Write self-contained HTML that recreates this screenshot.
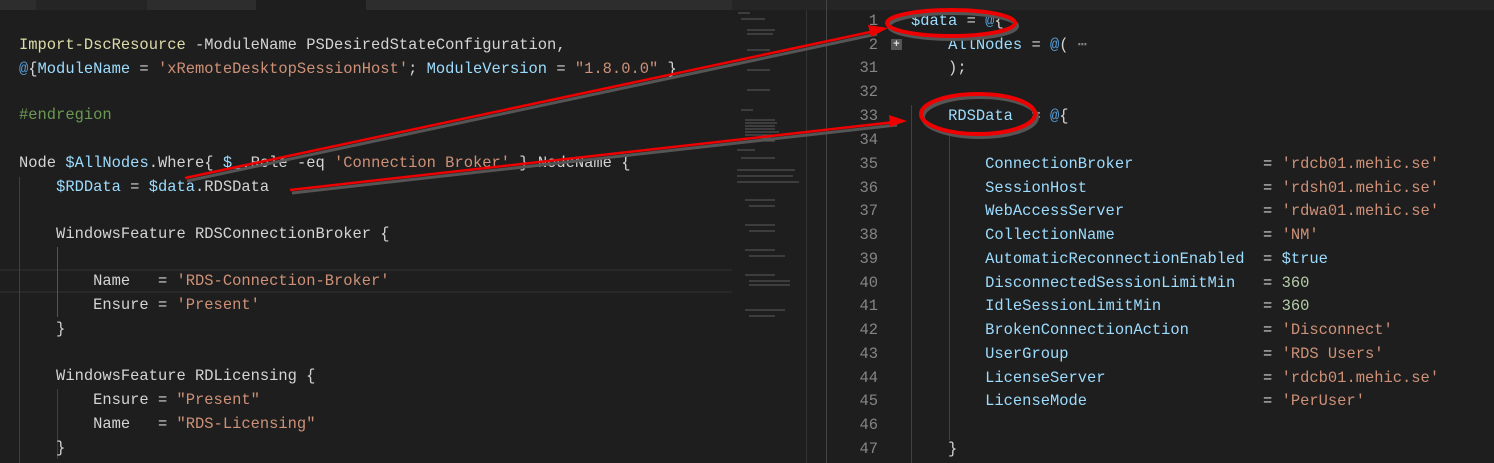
<!DOCTYPE html>
<html><head><style>
body{margin:0;width:1494px;height:463px;background:#1e1e1e;overflow:hidden;position:relative;font-family:"Liberation Mono",monospace;font-size:15.45px;color:#d4d4d4}
.l{position:absolute;white-space:pre;line-height:20px;height:20px}
.v{color:#9cdcfe}.s{color:#ce9178}.c{color:#6a9955}.k{color:#569cd6}.f{color:#dcdcaa}.n{color:#b5cea8}
.num{position:absolute;width:50px;text-align:right;color:#858585;left:828px;white-space:pre;line-height:20px}
.g{position:absolute;width:1px;background:#404040}
</style></head><body>
<div style="position:absolute;left:0;top:0;width:1494px;height:10px;background:#252526"></div>
<div style="position:absolute;left:0;top:0;width:36px;height:10px;background:#2d2d2d"></div>
<div style="position:absolute;left:147px;top:0;width:293px;height:10px;background:#2d2d2d"></div>
<div style="position:absolute;left:256px;top:0;width:110px;height:10px;background:#1e1e1e"></div>
<div style="position:absolute;left:366px;top:0;width:366px;height:10px;background:#2d2d2d"></div>
<div style="position:absolute;left:826px;top:0;width:668px;height:10px;background:#252526"></div>
<div style="position:absolute;left:732px;top:10px;width:90px;height:453px;background:#1e1e1e"></div>
<div style="position:absolute;left:806px;top:10px;width:1px;height:453px;background:#333"></div>
<div style="position:absolute;left:826px;top:0;width:1px;height:463px;background:#444"></div>
<svg style="position:absolute;left:735px;top:10px" width="70" height="320">
<g stroke="#777" stroke-width="1" opacity="0.7">
<line x1="3" y1="3" x2="15" y2="3"/><line x1="6" y1="9" x2="30" y2="9"/><line x1="12" y1="20" x2="40" y2="20"/><line x1="12" y1="24" x2="38" y2="24"/><line x1="12" y1="40" x2="35" y2="40"/><line x1="12" y1="60" x2="35" y2="60"/><line x1="12" y1="80" x2="35" y2="80"/>
<line x1="6" y1="100" x2="18" y2="100"/>
<line x1="10" y1="110" x2="40" y2="110"/><line x1="10" y1="113" x2="42" y2="113"/><line x1="10" y1="116" x2="40" y2="116"/><line x1="10" y1="119" x2="40" y2="119"/><line x1="10" y1="122" x2="44" y2="122"/><line x1="10" y1="125" x2="40" y2="125"/><line x1="10" y1="128" x2="38" y2="128"/><line x1="10" y1="131" x2="40" y2="131"/>
<line x1="2" y1="140" x2="20" y2="140"/><line x1="6" y1="148" x2="40" y2="148"/><line x1="2" y1="160" x2="60" y2="160"/><line x1="2" y1="166" x2="58" y2="166"/><line x1="2" y1="172" x2="64" y2="172"/>
<line x1="10" y1="190" x2="40" y2="190"/><line x1="14" y1="196" x2="40" y2="196"/><line x1="10" y1="215" x2="40" y2="215"/><line x1="14" y1="221" x2="40" y2="221"/><line x1="10" y1="240" x2="40" y2="240"/><line x1="14" y1="246" x2="50" y2="246"/><line x1="10" y1="265" x2="40" y2="265"/><line x1="14" y1="271" x2="55" y2="271"/><line x1="14" y1="275" x2="55" y2="275"/><line x1="10" y1="300" x2="50" y2="300"/><line x1="14" y1="306" x2="40" y2="306"/>
</g></svg>
<div style="position:absolute;left:0;top:269px;width:732px;height:24px;border-top:2px solid #282828;border-bottom:2px solid #282828;box-sizing:border-box"></div>
<div class="g" style="left:19px;top:177px;height:286px"></div>
<div class="g" style="left:57px;top:247px;height:70px;background:#555"></div>
<div class="g" style="left:57px;top:389px;height:70px"></div>
<div class="l" style="left:19px;top:35px"><span class="f">Import-DscResource</span> -ModuleName PSDesiredStateConfiguration,</div>
<div class="l" style="left:19px;top:59px"><span class="k">@</span>{<span class="v">ModuleName</span> = <span class="s">'xRemoteDesktopSessionHost'</span>; <span class="v">ModuleVersion</span> = <span class="s">"1.8.0.0"</span> }</div>
<div class="l c" style="left:19px;top:105px">#endregion</div>
<div class="l" style="left:19px;top:153px">Node <span class="v">$AllNodes</span>.Where{ <span class="v">$_</span>.Role -eq <span class="s">'Connection Broker'</span> }.NodeName {</div>
<div class="l" style="left:19px;top:177px">    <span class="v">$RDData</span> = <span class="v">$data</span>.RDSData</div>
<div class="l" style="left:19px;top:224px">    WindowsFeature RDSConnectionBroker {</div>
<div class="l" style="left:19px;top:271px">        Name   = <span class="s">'RDS-Connection-Broker'</span></div>
<div class="l" style="left:19px;top:295px">        Ensure = <span class="s">'Present'</span></div>
<div class="l" style="left:19px;top:319px">    }</div>
<div class="l" style="left:19px;top:366px">    WindowsFeature RDLicensing {</div>
<div class="l" style="left:19px;top:390px">        Ensure = <span class="s">"Present"</span></div>
<div class="l" style="left:19px;top:414px">        Name   = <span class="s">"RDS-Licensing"</span></div>
<div class="l" style="left:19px;top:438px">    }</div>
<div class="g" style="left:911px;top:105px;height:358px"></div>
<div class="g" style="left:949px;top:130px;height:310px"></div>
<div style="position:absolute;left:891px;top:39px;width:11px;height:11px;background:#555;color:#ddd;font:bold 11px/11px 'Liberation Sans',sans-serif;text-align:center">+</div>
<div class="num" style="top:11px">1</div>
<div class="num" style="top:35px">2</div>
<div class="num" style="top:58px">31</div>
<div class="num" style="top:82px">32</div>
<div class="num" style="top:106px">33</div>
<div class="num" style="top:130px">34</div>
<div class="num" style="top:154px">35</div>
<div class="num" style="top:178px">36</div>
<div class="num" style="top:201px">37</div>
<div class="num" style="top:225px">38</div>
<div class="num" style="top:249px">39</div>
<div class="num" style="top:273px">40</div>
<div class="num" style="top:296px">41</div>
<div class="num" style="top:320px">42</div>
<div class="num" style="top:344px">43</div>
<div class="num" style="top:368px">44</div>
<div class="num" style="top:391px">45</div>
<div class="num" style="top:415px">46</div>
<div class="num" style="top:439px">47</div>
<div class="l" style="left:911px;top:11px"><span class="v">$data</span> = <span class="k">@</span>{</div>
<div class="l" style="left:911px;top:35px">    <span class="v">AllNodes</span> = <span class="k">@</span>( <span style="color:#888">⋯</span></div>
<div class="l" style="left:911px;top:58px">    );</div>
<div class="l" style="left:911px;top:106px">    <span class="v">RDSData</span>  = <span class="k">@</span>{</div>
<div class="l" style="left:911px;top:154px">        <span class="v">ConnectionBroker</span>              = <span class="s">'rdcb01.mehic.se'</span></div>
<div class="l" style="left:911px;top:178px">        <span class="v">SessionHost</span>                   = <span class="s">'rdsh01.mehic.se'</span></div>
<div class="l" style="left:911px;top:201px">        <span class="v">WebAccessServer</span>               = <span class="s">'rdwa01.mehic.se'</span></div>
<div class="l" style="left:911px;top:225px">        <span class="v">CollectionName</span>                = <span class="s">'NM'</span></div>
<div class="l" style="left:911px;top:249px">        <span class="v">AutomaticReconnectionEnabled</span>  = <span class="v">$true</span></div>
<div class="l" style="left:911px;top:273px">        <span class="v">DisconnectedSessionLimitMin</span>   = <span class="n">360</span></div>
<div class="l" style="left:911px;top:296px">        <span class="v">IdleSessionLimitMin</span>           = <span class="n">360</span></div>
<div class="l" style="left:911px;top:320px">        <span class="v">BrokenConnectionAction</span>        = <span class="s">'Disconnect'</span></div>
<div class="l" style="left:911px;top:344px">        <span class="v">UserGroup</span>                     = <span class="s">'RDS Users'</span></div>
<div class="l" style="left:911px;top:368px">        <span class="v">LicenseServer</span>                 = <span class="s">'rdcb01.mehic.se'</span></div>
<div class="l" style="left:911px;top:391px">        <span class="v">LicenseMode</span>                   = <span class="s">'PerUser'</span></div>
<div class="l" style="left:911px;top:439px">    }</div>
<svg style="position:absolute;left:0;top:0" width="1494" height="463">
<g fill="none" stroke="#e00" stroke-width="2.5">
<line x1="185" y1="178" x2="875" y2="31" stroke="#555" stroke-width="3" transform="translate(2,3)"/>
<line x1="185" y1="178" x2="875" y2="31"/>
<line x1="290" y1="190" x2="895" y2="122" stroke="#555" stroke-width="3" transform="translate(2,3)"/>
<line x1="290" y1="190" x2="895" y2="122"/>
<ellipse cx="951" cy="23" rx="64" ry="13" stroke="#555" stroke-width="4" transform="translate(2,3)"/>
<ellipse cx="951" cy="23" rx="64" ry="13" stroke-width="4"/>
<ellipse cx="978" cy="114" rx="57" ry="20" stroke="#555" stroke-width="4" transform="translate(2,3)"/>
<ellipse cx="978" cy="114" rx="57" ry="20" stroke-width="4"/>
</g>
<polygon points="888,28 868,25 871,37" fill="#e00"/>
<polygon points="907,121 889,115 890,127" fill="#e00"/>
</svg>
</body></html>
